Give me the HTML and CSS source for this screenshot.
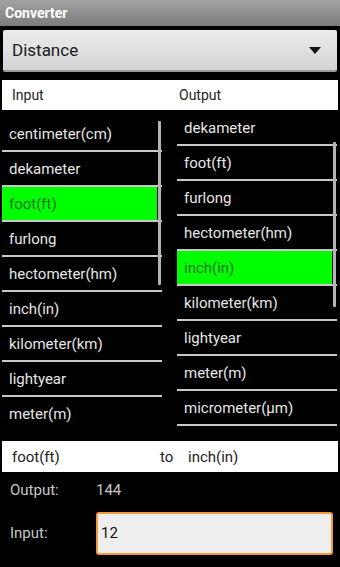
FILE: index.html
```html
<!DOCTYPE html>
<html>
  <head>
    <title>Converter</title>
    <link rel="stylesheet" href="styles.css">
  </head>
  <body>
    <div class="titlebar">Converter</div>

    <div class="spinner">
      <span>Distance</span>
      <span class="arrow"></span>
    </div>

    <div class="headers">
      <div class="head">Input</div>
      <div class="head">Output</div>
    </div>

    <div class="lists">
      <div class="list left">
        <div class="items">
          <div class="item">centimeter(cm)</div>
          <div class="item">dekameter</div>
          <div class="item selected">foot(ft)</div>
          <div class="item">furlong</div>
          <div class="item">hectometer(hm)</div>
          <div class="item">inch(in)</div>
          <div class="item">kilometer(km)</div>
          <div class="item">lightyear</div>
          <div class="item">meter(m)</div>
        </div>
        <div class="scrollbar"></div>
      </div>
      <div class="list right">
        <div class="items">
          <div class="item">dekameter</div>
          <div class="item">foot(ft)</div>
          <div class="item">furlong</div>
          <div class="item">hectometer(hm)</div>
          <div class="item selected">inch(in)</div>
          <div class="item">kilometer(km)</div>
          <div class="item">lightyear</div>
          <div class="item">meter(m)</div>
          <div class="item">micrometer(μm)</div>
        </div>
        <div class="scrollbar"></div>
      </div>
    </div>

    <div class="summary">
      <span class="from">foot(ft)</span>
      <span class="to">to</span>
      <span>inch(in)</span>
    </div>

    <div class="row output-row">
      <span class="label">Output:</span>
      <span class="value">144</span>
    </div>

    <div class="row input-row">
      <span class="label">Input:</span>
      <input class="value-input" type="text" value="12">
    </div>
  </body>
</html>
```

FILE: styles.css
```css
body {
  margin: 0;
  background-color: #000;
  font-family: Roboto, "Noto Sans", sans-serif;
  width: 340px;
  height: 567px;
  overflow: hidden;
}
.titlebar {
  height: 26px;
  line-height: 26px;
  padding-left: 5px;
  background: linear-gradient(#a2a2a2, #7c7c7c);
  color: #fff;
  font-weight: bold;
  font-size: 14px;
}
.spinner {
  margin: 4px 3px 0 3px;
  height: 42px;
  box-sizing: border-box;
  background: linear-gradient(#ececec, #d4d4d4);
  border-bottom: 2px solid #9a9a9a;
  border-radius: 2px;
  display: flex;
  align-items: center;
  justify-content: space-between;
  padding: 0 16px 0 9px;
  font-size: 17px;
  color: #1a1a1a;
}
.arrow {
  width: 0;
  height: 0;
  border-left: 6px solid transparent;
  border-right: 6px solid transparent;
  border-top: 7px solid #111;
}
.headers {
  margin: 8px 2px 0 2px;
  height: 30px;
  background-color: #fff;
  display: grid;
  grid-template-columns: 175px 1fr;
  align-items: center;
  font-size: 14px;
  color: #222;
}
.head {
  padding-left: 10px;
}
.head + .head {
  padding-left: 2px;
}
.lists {
  display: grid;
  grid-template-columns: 160px 160px;
  column-gap: 15px;
  margin: 0 0 0 2px;
  height: 320px;
  overflow: hidden;
}
.list {
  position: relative;
}
.list.left {
  padding-top: 7px;
}
.list.right {
  padding-top: 1px;
}
.item {
  height: 35px;
  box-sizing: border-box;
  border-bottom: 2px solid #c8c8c8;
  display: flex;
  align-items: center;
  padding-left: 7px;
  font-size: 15px;
  color: #e6e6e6;
}
.item.selected {
  background: linear-gradient(to right, #00ff00 calc(100% - 5px), transparent calc(100% - 5px));
  color: #1b701b;
}
.scrollbar {
  position: absolute;
  width: 3px;
  right: 1px;
  background-color: #b4b4b4;
  border-radius: 1px;
}
.left .scrollbar {
  top: 11px;
  height: 164px;
}
.right .scrollbar {
  top: 32px;
  height: 165px;
}
.summary {
  margin: 11px 2px 0 2px;
  height: 31px;
  background-color: #fff;
  display: flex;
  align-items: center;
  padding-left: 10px;
  font-size: 15px;
  color: #222;
}
.from {
  width: 148px;
}
.to {
  width: 28px;
}
.row {
  display: flex;
  align-items: center;
  padding-left: 10px;
  font-size: 15px;
  color: #c8c8c8;
}
.label {
  width: 86px;
}
.output-row {
  height: 36px;
}
.input-row {
  height: 50px;
}
.value-input {
  width: 237px;
  height: 43px;
  box-sizing: border-box;
  border: 2px solid #f09a3c;
  border-radius: 3px;
  background-color: #eeeeee;
  font-family: Roboto, "Noto Sans", sans-serif;
  font-size: 15px;
  color: #111;
  padding: 0 3px;
  outline: none;
}
```
